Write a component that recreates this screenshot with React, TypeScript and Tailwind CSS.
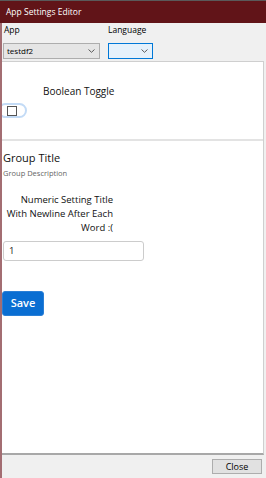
import React from "react";

function Chevron({ className }: { className?: string }) {
  return (
    <svg width="7" height="4" viewBox="0 0 7 4" className={className}>
      <path d="M0.5 0.5 L3.5 3.3 L6.5 0.5" fill="none" stroke="#5a5a5a" strokeWidth="1" />
    </svg>
  );
}

export default function App() {
  return (
    <div className="w-[266px] h-[478px] flex flex-col bg-[#f0f0f0] overflow-hidden font-['Open_Sans',sans-serif]">
      {/* Title bar */}
      <div className="h-[23px] shrink-0 border-t border-[#5a5a5a] bg-[#611418] text-white text-[8.5px] leading-[12px] pl-[6px] flex items-center">
        App Settings Editor
      </div>

      {/* Body */}
      <div className="flex-1 flex flex-col border-l-2 border-[#a36d72] min-h-0">
        {/* Form header */}
        <div className="flex pl-[1px] pt-[1px] shrink-0 text-[8.5px] leading-[12px] text-black">
          <div className="flex flex-col w-[97px]">
            <div className="pl-[1px]">App</div>
            <div className="mt-[7px] h-[16px] bg-[#e5e5e5] border border-[#adadad] flex items-center justify-between pl-[3px] pr-[4px]">
              <span className="text-[8px]">testdf2</span>
              <Chevron />
            </div>
          </div>
          <div className="flex flex-col w-[45px] ml-[8px]">
            <div>Language</div>
            <div className="mt-[7px] h-[16px] bg-[#e5f1fb] border border-[#0078d7] flex items-center justify-end pr-[4px]">
              <Chevron />
            </div>
          </div>
        </div>

        {/* Web panel */}
        <div className="mt-[2px] mr-[2px] flex-1 bg-white border-t border-r border-[#cfcfcf] border-b-2 border-b-[#a8a8a8] overflow-hidden flex flex-col min-h-0">
          <div className="pt-[22px] pl-[41px] text-[10px] leading-[14px] text-[#111]">Boolean Toggle</div>
          <div className="mt-[5px] ml-[-4px] w-[29px] h-[15px] rounded-full border-2 border-[#c3dbf6] flex items-center pl-[7px]">
            <div className="w-[10px] h-[10px] border border-[#555] bg-white" />
          </div>
          <div className="mt-[21px] h-[2px] bg-[#e3e3e3]" />

          <div className="pl-[1px] mt-[9px] text-[11px] leading-[15px] text-[#111]">Group Title</div>
          <div className="pl-[1px] mt-[3px] text-[7.5px] leading-[10px] text-[#666]">Group Description</div>

          <div className="pl-[1px] mt-[15px] w-[111px] text-right text-[9.5px] leading-[14px] text-[#111] font-medium">
            Numeric Setting Title
            <br />
            With Newline After Each
            <br />
            Word :(
          </div>

          <div className="ml-[1px] mt-[6px] w-[141px] h-[20px] border border-[#cccccc] rounded-[3px] flex items-center pl-[5px] text-[9.5px] text-[#222]">
            1
          </div>

          <div className="mt-[30px] w-[42px] h-[25px] rounded-[3px] bg-[#0a6ed2] border border-[#2a7fd6] flex items-center justify-center text-white text-[11px] font-semibold">
            Save
          </div>
        </div>

        {/* Bottom bar */}
        <div className="h-[23px] shrink-0 flex justify-end items-start pt-[4px] pr-[4px]">
          <div className="w-[50px] h-[15px] bg-[#e1e1e1] border border-[#adadad] flex items-center justify-center text-[9px] leading-[12px] text-black">
            Close
          </div>
        </div>
      </div>
    </div>
  );
}
